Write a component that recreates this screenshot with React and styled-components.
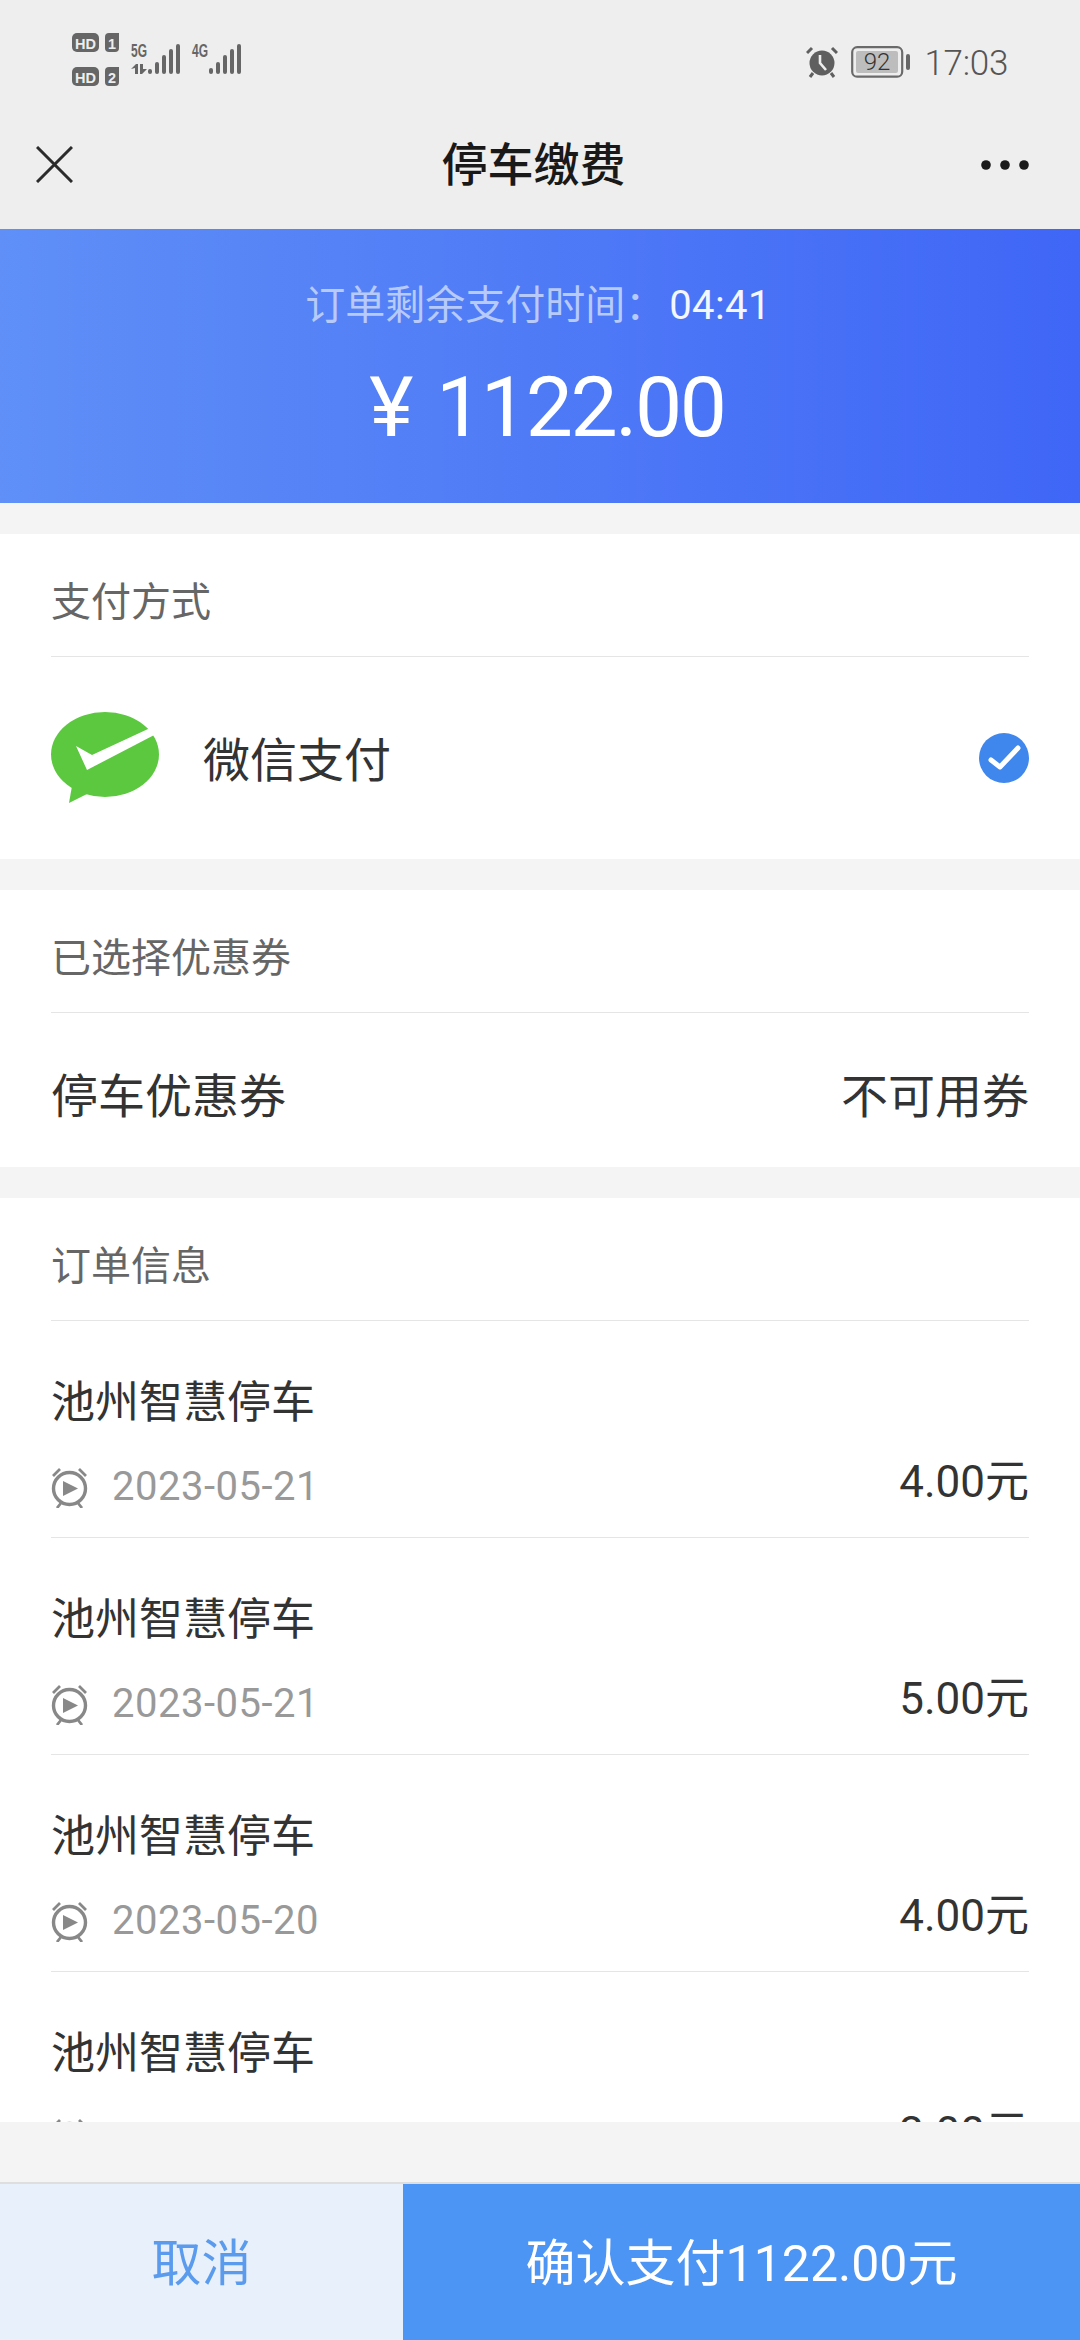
import React from "react";
import styled, { createGlobalStyle } from "styled-components";

const Global = createGlobalStyle`
  html, body { margin: 0; padding: 0; background: #f4f4f4; }
  body { font-family: Roboto, "Noto Sans CJK SC", sans-serif; }
  * { box-sizing: border-box; }
`;

const Page = styled.div`
  width: 1080px;
  height: 2340px;
  display: flex;
  flex-direction: column;
  overflow: hidden;
  background: #f4f4f4;
`;

const TopBar = styled.div`
  height: 229px;
  flex: none;
  background: #eeeeee;
  display: flex;
  flex-direction: column;
`;

const StatusBar = styled.div`
  height: 100px;
  flex: none;
  padding: 33px 72px 0 72px;
  display: flex;
  justify-content: space-between;
  align-items: flex-start;
`;

const StatusTime = styled.span`
  font-size: 35px;
  font-weight: 300;
  line-height: 32px;
  color: #555555;
  letter-spacing: -0.3px;
  padding-top: 5px;
`;

const StatusRight = styled.div`
  display: flex;
  align-items: center;
  gap: 13px;
  margin-top: 10px;
`;

const NavBar = styled.div`
  height: 129px;
  flex: none;
  padding: 0 51px 0 36px;
  display: flex;
  align-items: center;
  justify-content: space-between;
`;

const NavTitle = styled.div`
  font-size: 46px;
  font-weight: 500;
  line-height: 60px;
  color: #191919;
  margin-left: 13px;
`;

const Banner = styled.div`
  height: 274px;
  flex: none;
  background: linear-gradient(90deg, #5f8ff7 0%, #3f66f6 100%);
  display: flex;
  flex-direction: column;
  align-items: center;
  padding-top: 52px;
`;

const Countdown = styled.div`
  font-size: 40px;
  line-height: 50px;
  color: #b7caf9;
  display: flex;
  gap: 4px;
  margin-left: -4px;
`;

const CountdownValue = styled.span`
  color: #f4f7ff;
  letter-spacing: 0.4px;
`;

const Amount = styled.div`
  font-size: 84px;
  line-height: 100px;
  color: #ffffff;
  margin-top: 27px;
  margin-left: 14px;
  letter-spacing: -2.4px;
  display: flex;
  gap: 25px;
`;

const Scroll = styled.div`
  height: 1619px;
  flex: none;
  overflow: hidden;
  padding-top: 31px;
  display: flex;
  flex-direction: column;
  gap: 31px;
`;

const Card = styled.section`
  background: #ffffff;
  padding: 0 51px;
  flex: none;
`;

const CardTitle = styled.div`
  height: 123px;
  padding-top: 7px;
  display: flex;
  align-items: center;
  border-bottom: 1px solid #e5e5e5;
  font-size: 40px;
  color: #666666;
`;

const PayRow = styled.div`
  height: 202px;
  display: flex;
  align-items: center;
`;

const PayName = styled.div`
  font-size: 47px;
  color: #333333;
  margin-left: 43px;
  padding-bottom: 4px;
  flex: 1;
`;

const CouponRow = styled.div`
  height: 154px;
  padding-top: 4px;
  display: flex;
  align-items: center;
  justify-content: space-between;
  font-size: 47px;
  color: #333333;
`;

const Order = styled.div`
  height: 217px;
  border-bottom: 1px solid #e5e5e5;
  display: flex;
  justify-content: space-between;
  padding-top: 51px;
`;

const OrderInfo = styled.div`
  display: flex;
  flex-direction: column;
`;

const OrderName = styled.div`
  font-size: 44px;
  line-height: 62px;
  color: #333333;
`;

const OrderDate = styled.div`
  display: flex;
  align-items: center;
  gap: 24px;
  margin-top: 28px;
  font-size: 40px;
  line-height: 50px;
  letter-spacing: 0.5px;
  color: #999999;
`;

const OrderPrice = styled.div`
  font-size: 44px;
  line-height: 60px;
  color: #333333;
  margin-top: 80px;
`;

const FooterGap = styled.div`
  height: 62px;
  flex: none;
  background: #f4f4f4;
  border-bottom: 2px solid #dedede;
`;

const Actions = styled.div`
  flex: 1;
  display: flex;
`;

const ActionButton = styled.button`
  border: 0;
  padding: 0 0 6px;
  font-family: inherit;
  font-size: 50px;
  width: ${(p) => (p.$primary ? "677px" : "403px")};
  color: ${(p) => (p.$primary ? "#ffffff" : "#5a9bee")};
  background: ${(p) => (p.$primary ? "#4d95f5" : "#e7f0fb")};
`;

const signalBars = [
  [83, 29],
  [90, 22],
  [97, 16],
  [104, 11],
  [144, 29],
  [151, 22],
  [158, 16],
  [165, 11],
];

const SignalIcons = () => (
  <svg width="172" height="54" viewBox="0 0 172 54">
    <g fill="#666666">
      <rect x="0" y="0" width="27" height="19" rx="5" />
      <path d="M37 0 H47 V15 Q47 19 43 19 H37 Q33 19 33 15 V4 Q33 0 37 0 Z" />
      <rect x="0" y="34" width="27" height="19" rx="5" />
      <path d="M37 34 H47 V49 Q47 53 43 53 H37 Q33 53 33 49 V38 Q33 34 37 34 Z" />
      <rect x="76" y="36" width="4" height="5" rx="2" />
      <rect x="137" y="35" width="4" height="6" rx="2" />
      {signalBars.map(([x, y]) => (
        <rect key={x} x={x} y={y} width="4" height={41 - y} rx="2" />
      ))}
      <path d="M59 36 L64 31 H66 V41 H63 V35 Z M68 31 H71 V36 L75 36 L70 41 H68 Z" />
    </g>
    <g fill="#eeeeee" fontFamily="'Liberation Sans', sans-serif" fontWeight="700">
      <text x="3" y="15.5" fontSize="15" textLength="21" lengthAdjust="spacingAndGlyphs">HD</text>
      <text x="36" y="15.5" fontSize="15" textLength="8" lengthAdjust="spacingAndGlyphs">1</text>
      <text x="3" y="49.5" fontSize="15" textLength="21" lengthAdjust="spacingAndGlyphs">HD</text>
      <text x="36" y="49.5" fontSize="15" textLength="8" lengthAdjust="spacingAndGlyphs">2</text>
    </g>
    <g fill="#666666" fontFamily="'Liberation Sans', sans-serif" fontWeight="700" fontSize="18">
      <text x="59" y="24" textLength="16" lengthAdjust="spacingAndGlyphs">5G</text>
      <text x="120" y="24" textLength="16" lengthAdjust="spacingAndGlyphs">4G</text>
    </g>
  </svg>
);

const AlarmIcon = () => (
  <svg width="32" height="32" viewBox="0 0 32 32">
    <circle cx="16" cy="17" r="12.5" fill="#5f5f5f" />
    <path d="M1 7 L6 2 M31 7 L26 2 M7 27 L4 31 M25 27 L28 31" stroke="#5f5f5f" strokeWidth="3" fill="none" />
    <path d="M14 9 V17 L20 24" stroke="#eeeeee" strokeWidth="2.6" fill="none" />
  </svg>
);

const BatteryIcon = () => (
  <svg width="60" height="32" viewBox="0 0 60 32">
    <rect x="1.2" y="1.2" width="50" height="29.5" rx="5" fill="none" stroke="#6a6a6a" strokeWidth="2.2" />
    <rect x="5" y="5" width="42" height="22" rx="2" fill="#bdbdbd" />
    <rect x="55" y="8" width="4" height="16" rx="2" fill="#666666" />
    <text x="26" y="24" fontSize="24" fontWeight="300" textAnchor="middle" fill="#333333" fontFamily="Roboto, sans-serif">92</text>
  </svg>
);

const CloseIcon = () => (
  <svg width="37" height="37" viewBox="0 0 37 37">
    <path d="M1 1 L36 36 M36 1 L1 36" stroke="#2b2b2b" strokeWidth="3" fill="none" />
  </svg>
);

const MoreIcon = () => (
  <svg width="48" height="10" viewBox="0 0 48 10">
    <g fill="#1a1a1a">
      <circle cx="5" cy="5" r="4.8" />
      <circle cx="24" cy="5" r="4.8" />
      <circle cx="43" cy="5" r="4.8" />
    </g>
  </svg>
);

const WechatPay = () => (
  <svg width="109" height="92" viewBox="0 0 109 92">
    <ellipse cx="54" cy="42.5" rx="54" ry="42.5" fill="#5cc83f" />
    <path d="M21 74 L18 91 L36 82 Z" fill="#5cc83f" />
    <path d="M25 34 L41 43 L97 17 L109 20 L36 58 Z" fill="#ffffff" />
  </svg>
);

const CheckedIcon = () => (
  <svg width="50" height="50" viewBox="0 0 50 50">
    <circle cx="25" cy="25" r="25" fill="#3f87ec" />
    <path d="M12 27 L21 34 L39 15" stroke="#ffffff" strokeWidth="5" strokeLinecap="round" strokeLinejoin="round" fill="none" />
  </svg>
);

const ClockIcon = () => (
  <svg width="37" height="41" viewBox="0 0 37 41">
    <circle cx="18.5" cy="21.5" r="16" fill="none" stroke="#888888" strokeWidth="3.4" />
    <path d="M12 14 L27 21.5 L12 29 Z" fill="#888888" />
    <path d="M2 9 L9 2 M35 9 L28 2 M10 36 L6 41 M27 36 L31 41" stroke="#888888" strokeWidth="2.8" fill="none" />
  </svg>
);

const orders = [
  { date: "2023-05-21", price: "4.00元" },
  { date: "2023-05-21", price: "5.00元" },
  { date: "2023-05-20", price: "4.00元" },
  { date: "2023-05-20", price: "3.00元" },
];

export default function App() {
  return (
    <Page>
      <Global />
      <TopBar>
        <StatusBar>
          <SignalIcons />
          <StatusRight>
            <AlarmIcon />
            <BatteryIcon />
            <StatusTime>17:03</StatusTime>
          </StatusRight>
        </StatusBar>
        <NavBar>
          <CloseIcon />
          <NavTitle>停车缴费</NavTitle>
          <MoreIcon />
        </NavBar>
      </TopBar>
      <Banner>
        <Countdown>
          <span>订单剩余支付时间：</span>
          <CountdownValue>04:41</CountdownValue>
        </Countdown>
        <Amount>
          <span>¥</span>
          <span>1122.00</span>
        </Amount>
      </Banner>
      <Scroll>
        <Card>
          <CardTitle>支付方式</CardTitle>
          <PayRow>
            <WechatPay />
            <PayName>微信支付</PayName>
            <CheckedIcon />
          </PayRow>
        </Card>
        <Card>
          <CardTitle>已选择优惠券</CardTitle>
          <CouponRow>
            <span>停车优惠券</span>
            <span>不可用券</span>
          </CouponRow>
        </Card>
        <Card>
          <CardTitle>订单信息</CardTitle>
          {orders.map((o, i) => (
            <Order key={i}>
              <OrderInfo>
                <OrderName>池州智慧停车</OrderName>
                <OrderDate>
                  <ClockIcon />
                  {o.date}
                </OrderDate>
              </OrderInfo>
              <OrderPrice>{o.price}</OrderPrice>
            </Order>
          ))}
        </Card>
      </Scroll>
      <FooterGap />
      <Actions>
        <ActionButton>取消</ActionButton>
        <ActionButton $primary>确认支付1122.00元</ActionButton>
      </Actions>
    </Page>
  );
}
